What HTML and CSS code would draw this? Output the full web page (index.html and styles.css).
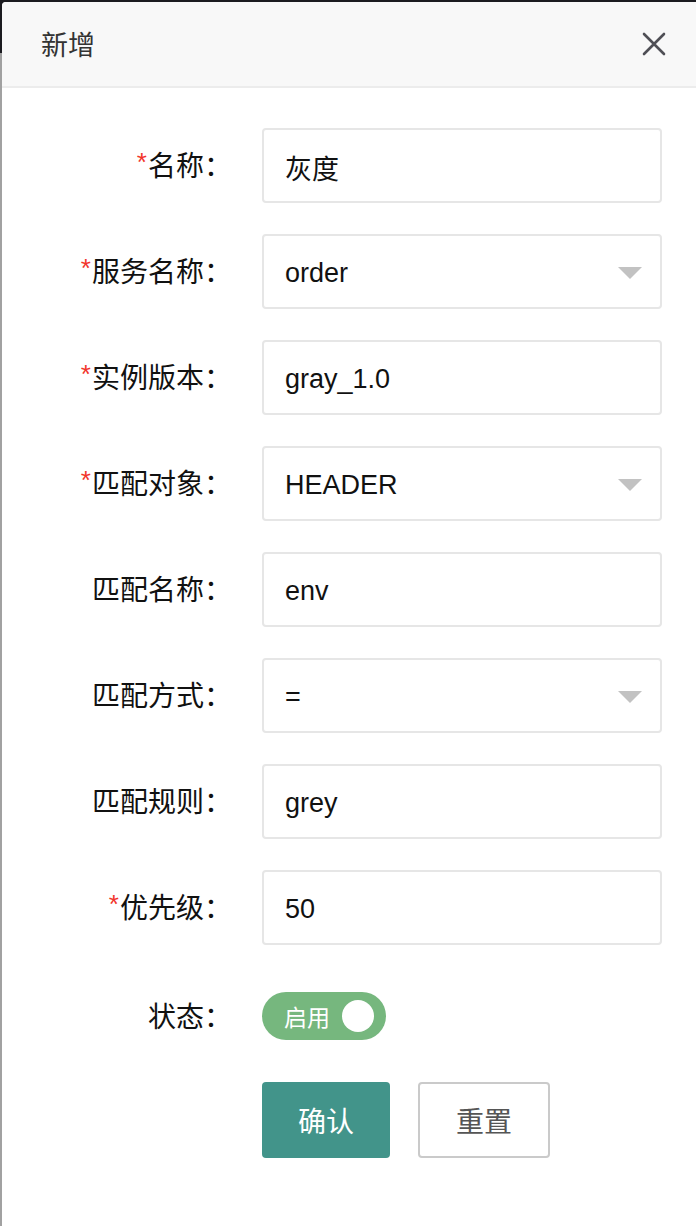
FILE: index.html
```html
<!DOCTYPE html>
<html lang="zh-CN">
<head>
<meta charset="utf-8">
<title>新增</title>
<link rel="stylesheet" href="styles.css">
</head>
<body>
<div class="screen">
  <div class="modal">
    <div class="modal-header">
      <span class="modal-title">新增</span>
      <span class="close" aria-label="关闭">
        <svg width="24" height="24" viewBox="0 0 24 24"><path d="M2 2 L22 22 M22 2 L2 22" stroke="#4f4f55" stroke-width="2.6" stroke-linecap="round" fill="none"/></svg>
      </span>
    </div>
    <div class="form">
      <div class="field">
        <div class="label"><span class="req">*</span>名称：</div>
        <div class="input">灰度</div>
      </div>
      <div class="field">
        <div class="label"><span class="req">*</span>服务名称：</div>
        <div class="input select"><span>order</span><span class="caret"></span></div>
      </div>
      <div class="field">
        <div class="label"><span class="req">*</span>实例版本：</div>
        <div class="input">gray_1.0</div>
      </div>
      <div class="field">
        <div class="label"><span class="req">*</span>匹配对象：</div>
        <div class="input select"><span>HEADER</span><span class="caret"></span></div>
      </div>
      <div class="field">
        <div class="label">匹配名称：</div>
        <div class="input">env</div>
      </div>
      <div class="field">
        <div class="label">匹配方式：</div>
        <div class="input select"><span>=</span><span class="caret"></span></div>
      </div>
      <div class="field">
        <div class="label">匹配规则：</div>
        <div class="input">grey</div>
      </div>
      <div class="field">
        <div class="label"><span class="req">*</span>优先级：</div>
        <div class="input">50</div>
      </div>
      <div class="field field-status">
        <div class="label">状态：</div>
        <div class="status-cell">
          <div class="switch"><span class="switch-text">启用</span><span class="knob"></span></div>
        </div>
      </div>
      <div class="actions">
        <div class="spacer"></div>
        <div class="btns">
          <span class="btn btn-primary">确认</span>
          <span class="btn btn-default">重置</span>
        </div>
      </div>
    </div>
  </div>
</div>
</body>
</html>
```
FILE: styles.css
```css
html, body {
  margin: 0;
  padding: 0;
}
body {
  font-family: "Liberation Sans", "Noto Sans CJK SC", sans-serif;
  color: #111;
}
.screen {
  width: 696px;
  height: 1226px;
  overflow: hidden;
  background: linear-gradient(#1b1b20 0, #1b1b20 53px, #a1a1a1 53px, #a1a1a1 100%);
  display: flex;
  padding: 2px 0 0 2px;
  box-sizing: border-box;
}
.modal {
  flex: 1;
  background: #fff;
  border-top-left-radius: 4px;
  display: flex;
  flex-direction: column;
}
.modal-header {
  height: 84px;
  background: #f8f8f8;
  border-bottom: 2px solid #ececec;
  display: flex;
  align-items: center;
  justify-content: space-between;
  padding: 0 30px 0 39px;
  border-top-left-radius: 4px;
}
.modal-title {
  font-family: "Noto Sans CJK SC", sans-serif;
  font-size: 27px;
  color: #333;
  margin-top: -2px;
}
.close {
  width: 24px;
  height: 24px;
  display: flex;
}
.form {
  padding-top: 40px;
  display: flex;
  flex-direction: column;
}
.field {
  display: grid;
  grid-template-columns: 216px 400px;
  column-gap: 44px;
  align-items: center;
  height: 75px;
  margin-bottom: 31px;
}
.label {
  text-align: right;
  font-family: "Noto Sans CJK SC", sans-serif;
  font-size: 28px;
  color: #111;
  white-space: nowrap;
  margin-right: -14px;
  margin-top: -3px;
}
.req {
  color: #f2352b;
  font-family: "Liberation Sans", sans-serif;
  font-size: 26px;
  vertical-align: 5px;
  margin-right: 1px;
}
.input {
  height: 75px;
  box-sizing: border-box;
  border: 2px solid #e6e6e6;
  border-radius: 4px;
  padding: 3px 18px 0 21px;
  display: flex;
  align-items: center;
  font-size: 27px;
  color: #111;
}
.select {
  justify-content: space-between;
}
.caret {
  width: 0;
  height: 0;
  border-left: 12px solid transparent;
  border-right: 12px solid transparent;
  border-top: 12px solid #c2c2c2;
  margin-top: -1px;
}
.field-status {
  height: 80px;
  margin-bottom: 26px;
}
.status-cell {
  display: flex;
  align-items: center;
}
.switch {
  width: 124px;
  height: 48px;
  box-sizing: border-box;
  border-radius: 24px;
  background: #76b77e;
  display: flex;
  align-items: center;
  justify-content: space-between;
  padding: 0 12px 0 22px;
}
.switch-text {
  font-family: "Noto Sans CJK SC", sans-serif;
  font-size: 23px;
  color: #fff;
}
.knob {
  width: 32px;
  height: 32px;
  border-radius: 50%;
  background: #fff;
}
.actions {
  display: grid;
  grid-template-columns: 216px auto;
  column-gap: 44px;
}
.btns {
  display: flex;
  gap: 28px;
}
.btn {
  height: 76px;
  box-sizing: border-box;
  border-radius: 4px;
  display: flex;
  align-items: center;
  justify-content: center;
  font-family: "Noto Sans CJK SC", sans-serif;
  font-size: 28px;
}
.btn-primary {
  width: 128px;
  background: #42948a;
  color: #fff;
}
.btn-default {
  width: 132px;
  border: 2px solid #cacaca;
  color: #555;
  background: #fff;
}
```
